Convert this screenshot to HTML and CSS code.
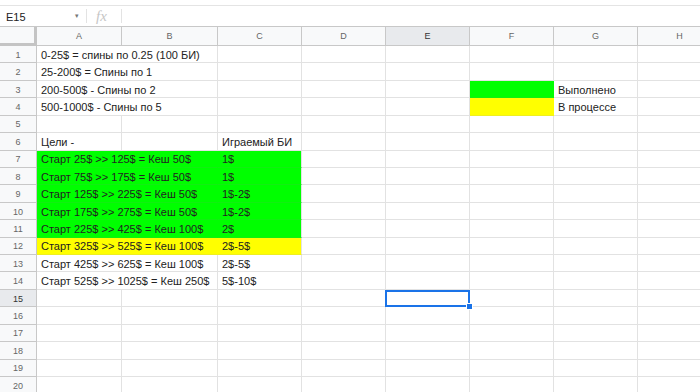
FILE: index.html
```html
<!DOCTYPE html>
<html>
<head>
  <meta charset="UTF-8">
  <title>Таблица</title>
  <link rel="stylesheet" href="styles.css">
</head>
<body>
  <div class="topline"></div>

  <!-- строка формул -->
  <div class="formula-bar">
    <div class="name-box">E15</div>
    <div class="name-arrow">▾</div>
    <div class="sep"></div>
    <div class="fx">fx</div>
    <div class="sep"></div>
  </div>

  <div class="sheet">
    <!-- заголовки столбцов -->
    <div class="row head">
      <div class="corner"></div>
      <div class="col-h">A</div>
      <div class="col-h">B</div>
      <div class="col-h">C</div>
      <div class="col-h">D</div>
      <div class="col-h active">E</div>
      <div class="col-h">F</div>
      <div class="col-h">G</div>
      <div class="col-h">H</div>
    </div>

    <div class="row">
      <div class="num">1</div>
      <div class="cell wide">0-25$ = спины по 0.25 (100 БИ)</div>
      <div class="cell"></div><div class="cell"></div><div class="cell"></div>
      <div class="cell"></div><div class="cell"></div><div class="cell"></div>
    </div>
    <div class="row">
      <div class="num">2</div>
      <div class="cell wide">25-200$ = Спины по 1</div>
      <div class="cell"></div><div class="cell"></div><div class="cell"></div>
      <div class="cell"></div><div class="cell"></div><div class="cell"></div>
    </div>
    <div class="row">
      <div class="num">3</div>
      <div class="cell wide">200-500$ - Спины по 2</div>
      <div class="cell"></div><div class="cell"></div><div class="cell"></div>
      <div class="cell green"></div>
      <div class="cell">Выполнено</div>
      <div class="cell"></div>
    </div>
    <div class="row">
      <div class="num">4</div>
      <div class="cell wide">500-1000$ - Спины по 5</div>
      <div class="cell"></div><div class="cell"></div><div class="cell"></div>
      <div class="cell yellow"></div>
      <div class="cell">В процессе</div>
      <div class="cell"></div>
    </div>
    <div class="row">
      <div class="num">5</div>
      <div class="cell"></div><div class="cell"></div><div class="cell"></div><div class="cell"></div>
      <div class="cell"></div><div class="cell"></div><div class="cell"></div><div class="cell"></div>
    </div>
    <div class="row">
      <div class="num">6</div>
      <div class="cell">Цели -</div>
      <div class="cell"></div>
      <div class="cell">Играемый БИ</div>
      <div class="cell"></div><div class="cell"></div><div class="cell"></div>
      <div class="cell"></div><div class="cell"></div>
    </div>

    <div class="row">
      <div class="num">7</div>
      <div class="cell wide green">Старт 25$ &gt;&gt; 125$ = Кеш 50$</div>
      <div class="cell green">1$</div>
      <div class="cell"></div><div class="cell"></div><div class="cell"></div>
      <div class="cell"></div><div class="cell"></div>
    </div>
    <div class="row">
      <div class="num">8</div>
      <div class="cell wide green">Старт 75$ &gt;&gt; 175$ = Кеш 50$</div>
      <div class="cell green">1$</div>
      <div class="cell"></div><div class="cell"></div><div class="cell"></div>
      <div class="cell"></div><div class="cell"></div>
    </div>
    <div class="row">
      <div class="num">9</div>
      <div class="cell wide green">Старт 125$ &gt;&gt; 225$ = Кеш 50$</div>
      <div class="cell green">1$-2$</div>
      <div class="cell"></div><div class="cell"></div><div class="cell"></div>
      <div class="cell"></div><div class="cell"></div>
    </div>
    <div class="row">
      <div class="num">10</div>
      <div class="cell wide green">Старт 175$ &gt;&gt; 275$ = Кеш 50$</div>
      <div class="cell green">1$-2$</div>
      <div class="cell"></div><div class="cell"></div><div class="cell"></div>
      <div class="cell"></div><div class="cell"></div>
    </div>
    <div class="row">
      <div class="num">11</div>
      <div class="cell wide green">Старт 225$ &gt;&gt; 425$ = Кеш 100$</div>
      <div class="cell green">2$</div>
      <div class="cell"></div><div class="cell"></div><div class="cell"></div>
      <div class="cell"></div><div class="cell"></div>
    </div>
    <div class="row">
      <div class="num">12</div>
      <div class="cell wide yellow">Старт 325$ &gt;&gt; 525$ = Кеш 100$</div>
      <div class="cell yellow">2$-5$</div>
      <div class="cell"></div><div class="cell"></div><div class="cell"></div>
      <div class="cell"></div><div class="cell"></div>
    </div>
    <div class="row">
      <div class="num">13</div>
      <div class="cell wide">Старт 425$ &gt;&gt; 625$ = Кеш 100$</div>
      <div class="cell">2$-5$</div>
      <div class="cell"></div><div class="cell"></div><div class="cell"></div>
      <div class="cell"></div><div class="cell"></div>
    </div>
    <div class="row">
      <div class="num">14</div>
      <div class="cell wide">Старт 525$ &gt;&gt; 1025$ = Кеш 250$</div>
      <div class="cell">5$-10$</div>
      <div class="cell"></div><div class="cell"></div><div class="cell"></div>
      <div class="cell"></div><div class="cell"></div>
    </div>

    <div class="row">
      <div class="num active">15</div>
      <div class="cell"></div><div class="cell"></div><div class="cell"></div><div class="cell"></div>
      <div class="cell selected"><span class="handle"></span></div>
      <div class="cell"></div><div class="cell"></div><div class="cell"></div>
    </div>
    <div class="row">
      <div class="num">16</div>
      <div class="cell"></div><div class="cell"></div><div class="cell"></div><div class="cell"></div>
      <div class="cell"></div><div class="cell"></div><div class="cell"></div><div class="cell"></div>
    </div>
    <div class="row">
      <div class="num">17</div>
      <div class="cell"></div><div class="cell"></div><div class="cell"></div><div class="cell"></div>
      <div class="cell"></div><div class="cell"></div><div class="cell"></div><div class="cell"></div>
    </div>
    <div class="row">
      <div class="num">18</div>
      <div class="cell"></div><div class="cell"></div><div class="cell"></div><div class="cell"></div>
      <div class="cell"></div><div class="cell"></div><div class="cell"></div><div class="cell"></div>
    </div>
    <div class="row">
      <div class="num">19</div>
      <div class="cell"></div><div class="cell"></div><div class="cell"></div><div class="cell"></div>
      <div class="cell"></div><div class="cell"></div><div class="cell"></div><div class="cell"></div>
    </div>
    <div class="row">
      <div class="num">20</div>
      <div class="cell"></div><div class="cell"></div><div class="cell"></div><div class="cell"></div>
      <div class="cell"></div><div class="cell"></div><div class="cell"></div><div class="cell"></div>
    </div>
  </div>
</body>
</html>
```

FILE: styles.css
```css
* {
  box-sizing: border-box;
}

body {
  margin: 0;
  width: 700px;
  height: 392px;
  overflow: hidden;
  background: #fff;
  font-family: "Liberation Sans", Arial, sans-serif;
  color: #222;
}

.topline {
  height: 6px;
  border-bottom: 1px solid #e4e4e4;
}

/* строка формул */
.formula-bar {
  height: 20px;
  display: flex;
  align-items: center;
  font-size: 11px;
}
.name-box {
  width: 75px;
  padding-left: 6px;
  padding-top: 1px;
  color: #222;
}
.name-arrow {
  width: 11px;
  font-size: 7px;
  color: #777;
}
.sep {
  width: 1px;
  height: 14px;
  background: #e3e3e3;
}
.fx {
  width: 34px;
  padding-left: 9px;
  font-family: "Liberation Serif", serif;
  font-style: italic;
  font-size: 15px;
  color: #c6c6c6;
}

/* сетка */
.sheet {
  width: 700px;
  overflow: hidden;
}
.row {
  display: grid;
  grid-template-columns: 37px 85px 96px 84px 84px 84px 84px 84px 84px;
  height: 17.43px;
}
.row.head {
  height: 20px;
  border-top: 1px solid #c8c8c8;
}

.corner {
  background: #f8f9fa;
  border-right: 3px solid #c4c4c4;
  border-bottom: 3px solid #c4c4c4;
}
.col-h {
  background: #f8f9fa;
  border-right: 1px solid #c8c8c8;
  border-bottom: 1px solid #c8c8c8;
  display: flex;
  align-items: center;
  justify-content: center;
  font-size: 9px;
  color: #666;
}
.col-h.active {
  background: #e8eaed;
  color: #333;
}

.num {
  background: #f8f9fa;
  border-right: 1px solid #c8c8c8;
  border-bottom: 1px solid #c8c8c8;
  display: flex;
  align-items: center;
  justify-content: center;
  padding-top: 1px;
  font-size: 9px;
  color: #666;
}
.num.active {
  background: #e8eaed;
  color: #333;
}

.cell {
  position: relative;
  border-right: 1px solid #e2e2e2;
  border-bottom: 1px solid #e2e2e2;
  padding: 1px 3px 0 4px;
  display: flex;
  align-items: center;
  font-size: 11px;
  white-space: nowrap;
}
.cell.wide {
  grid-column: span 2;
}
.cell.green {
  background: #00ff00;
  border-right-color: #00ff00;
  border-bottom-color: #12ee12;
}
.cell.yellow {
  background: #ffff00;
  border-right-color: #ffff00;
  border-bottom-color: #eeee22;
}
.cell.green:nth-child(3),
.cell.yellow:nth-child(3) {
  border-right-color: #e2e2e2;
}

.cell.selected {
  border: 2px solid #1a73e8;
  margin-left: -1px;
}
.handle {
  position: absolute;
  z-index: 2;
  right: -5px;
  bottom: -5px;
  width: 7px;
  height: 7px;
  background: #1a73e8;
  border: 1px solid #fff;
}
```
